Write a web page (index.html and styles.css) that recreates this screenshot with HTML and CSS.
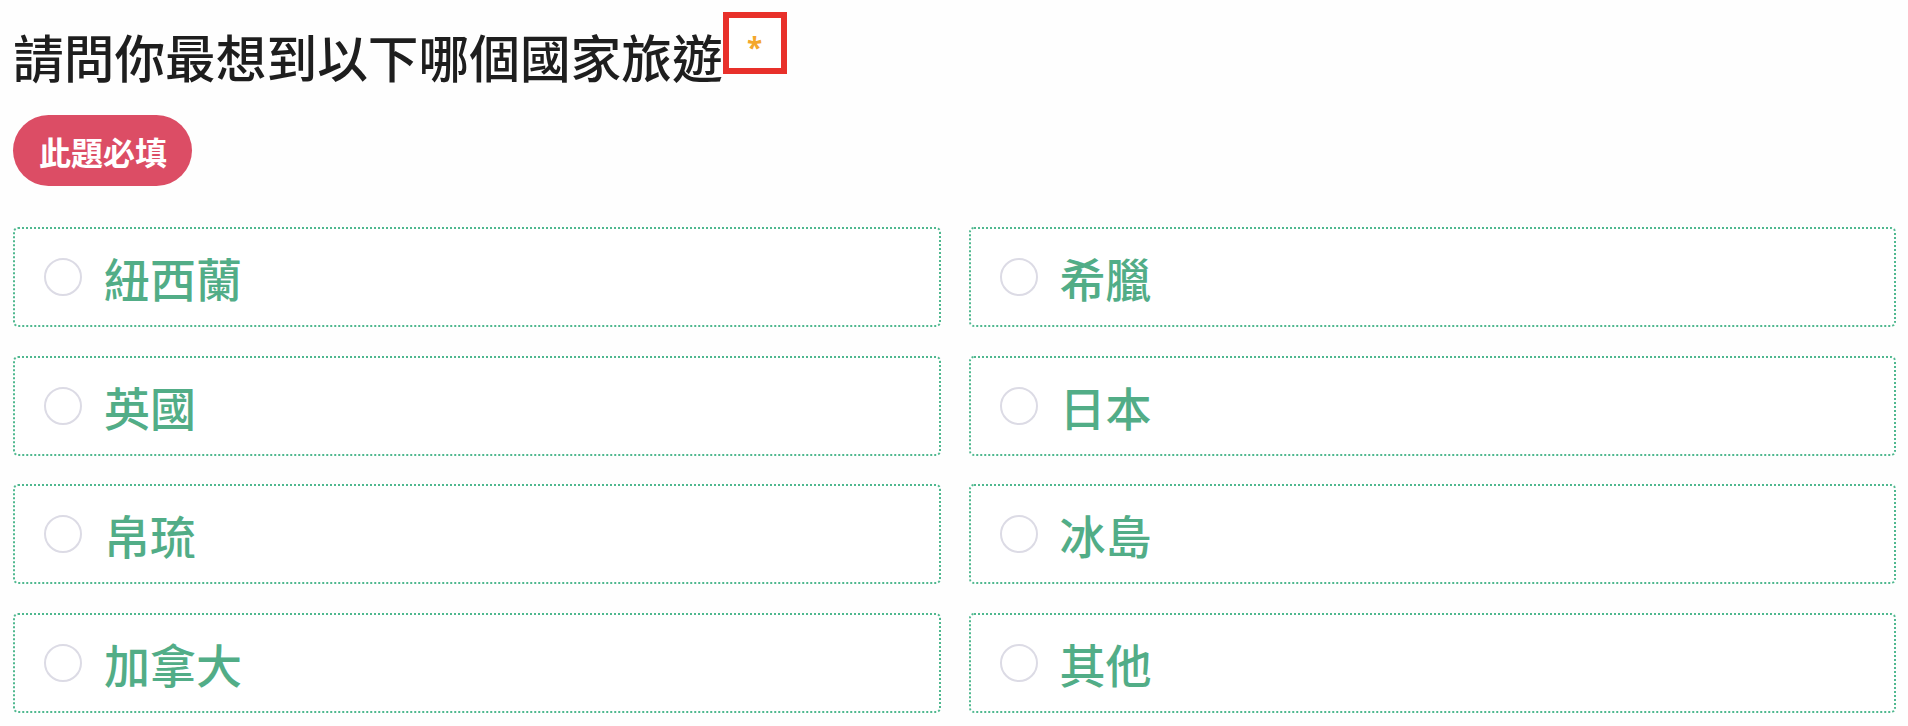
FILE: index.html
```html
<!DOCTYPE html>
<html lang="zh-Hant">
<head>
<meta charset="utf-8">
<title>問卷</title>
<link rel="stylesheet" href="styles.css">
</head>
<body>
<main class="page">
  <div class="question-head">
    <h1 class="question-title">請問你最想到以下哪個國家旅遊</h1>
    <span class="required-mark"><span class="star">*</span></span>
  </div>
  <div class="badge">此題必填</div>
  <div class="options">
    <label class="option"><span class="radio"></span><span class="option-text">紐西蘭</span></label>
    <label class="option"><span class="radio"></span><span class="option-text">希臘</span></label>
    <label class="option"><span class="radio"></span><span class="option-text">英國</span></label>
    <label class="option"><span class="radio"></span><span class="option-text">日本</span></label>
    <label class="option"><span class="radio"></span><span class="option-text">帛琉</span></label>
    <label class="option"><span class="radio"></span><span class="option-text">冰島</span></label>
    <label class="option"><span class="radio"></span><span class="option-text">加拿大</span></label>
    <label class="option"><span class="radio"></span><span class="option-text">其他</span></label>
  </div>
</main>
</body>
</html>
```

FILE: styles.css
```css
html, body {
  margin: 0;
  padding: 0;
  background: #fefefe;
}

body {
  font-family: "Noto Sans CJK TC", "Noto Sans", sans-serif;
}

.page {
  padding: 12px 12px 0 13px;
}

.question-head {
  display: flex;
  align-items: flex-start;
  height: 74px;
}

.question-title {
  margin: 14px 0 0 0;
  font-size: 50.7px;
  line-height: 60px;
  font-weight: 500;
  color: #1e1e1e;
  white-space: nowrap;
}

.required-mark {
  display: inline-flex;
  align-items: center;
  justify-content: center;
  box-sizing: border-box;
  width: 64px;
  height: 62px;
  border: 6px solid #e8302a;
  background: #ffffff;
}

.star {
  font-family: "Noto Sans", sans-serif;
  font-size: 28px;
  font-weight: 700;
  line-height: 1;
  color: #f4a72c;
  margin-top: 8px;
}

.badge {
  display: inline-flex;
  align-items: center;
  box-sizing: border-box;
  height: 71px;
  margin-top: 29px;
  padding: 0 25px 0 26px;
  border-radius: 36px;
  background: #dc4d65;
  color: #ffffff;
  font-size: 32px;
  font-weight: 700;
  line-height: 1;
}

.options {
  display: grid;
  grid-template-columns: 1fr 1fr;
  column-gap: 28px;
  row-gap: 28.7px;
  margin-top: 41px;
}

.option {
  display: flex;
  align-items: center;
  box-sizing: border-box;
  height: 100px;
  padding-left: 29px;
  border: 2px dotted #4fb88f;
  border-radius: 5px;
  background: #ffffff;
}

.radio {
  flex: none;
  box-sizing: border-box;
  width: 38px;
  height: 38px;
  border: 2px solid #dcdbe5;
  border-radius: 50%;
  margin-right: 22px;
}

.option-text {
  font-size: 46px;
  font-weight: 500;
  line-height: 1;
  color: #52ad87;
}
```
